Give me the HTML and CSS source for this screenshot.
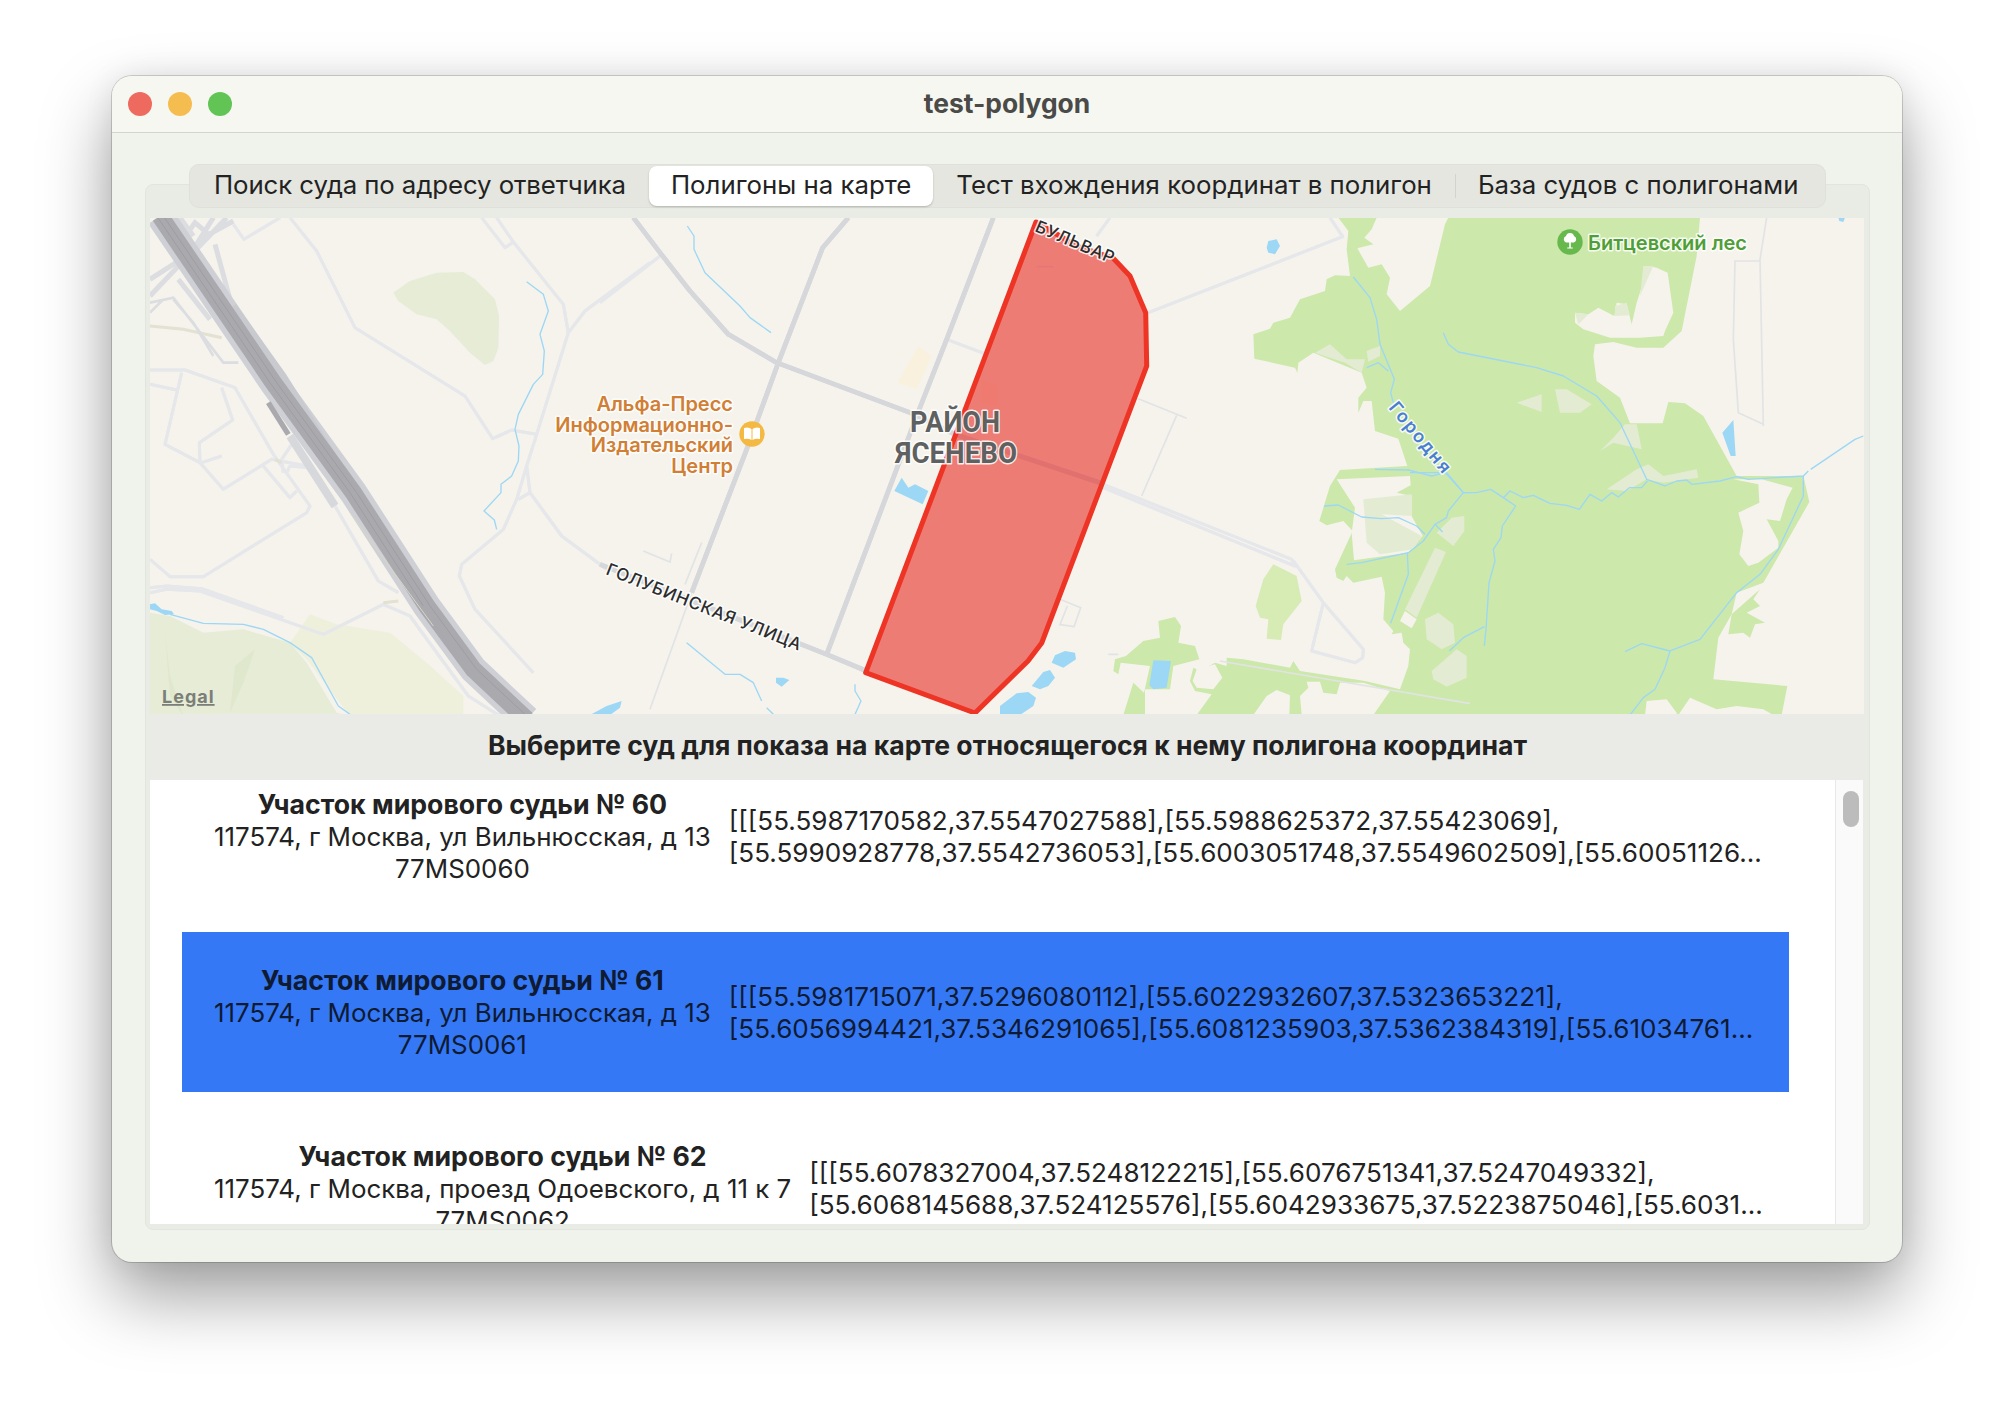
FILE: index.html
```html
<!DOCTYPE html>
<html lang="ru">
<head>
<meta charset="utf-8">
<title>test-polygon</title>
<link rel="stylesheet" href="styles.css">
</head>
<body>
<div class="window">
  <div class="titlebar">
    <div class="lights">
      <span class="light red"></span>
      <span class="light yellow"></span>
      <span class="light green"></span>
    </div>
    <div class="title">test-polygon</div>
  </div>

  <div class="content">
    <div class="tabs">
      <div class="tab tab-first">Поиск суда по адресу ответчика</div>
      <div class="tab selected">Полигоны на карте</div>
      <div class="tab">Тест вхождения координат в полигон</div>
      <div class="tab-sep"></div>
      <div class="tab">База судов с полигонами</div>
    </div>

    <div class="panel">
      <svg class="map" width="1714" height="496" viewBox="150 218 1714 496">
        <rect class="land" x="150" y="218" width="1714" height="496"/>

        <!-- left part, coordinates are 3x from 150,216 -->
        <g transform="translate(150 216) scale(.33333)">
          <path class="park" d="M730 230L780 195L860 170L940 168L975 190L1035 250L1047 300L1045 395L1030 435L1005 447L960 410L900 345L860 310L800 295L745 255Z"/>
          <path class="park-light" d="M480 1195L560 1225L720 1250L830 1340L940 1440V1500H600L470 1330L420 1280Z"/>
          <path class="park" d="M0 1190L60 1200L160 1250L280 1240L420 1280L470 1340L560 1490L600 1500H0Z"/>
          <path class="park-dark" d="M45 1250L60 1380L100 1500L60 1440ZM315 1300L255 1350L240 1490L280 1400Z"/>

          <path class="tan" d="M0 330L100 340L215 365"/>
          <g class="ramp">
            <path d="M0 240L85 150L120 120L230 5M130 100L190 5M195 85L240 250M85 190L180 310M120 130L110 55L135 20L170 50L120 120M0 190L70 145L100 120M90 5L130 60M150 70L250 15"/>
            <path class="thin" d="M0 260L70 245L220 440L265 440M0 290L40 250M70 250L130 320L190 420"/>
          </g>
          <g class="road-casing" id="minor-a">
            <path d="M420 5L500 105L615 335L945 540L1028 668L1085 642L1158 655"/>
            <path d="M995 5L1065 95L1090 78L1240 265L1255 350M1040 5L1090 78"/>
            <path d="M1500 140L1305 285L1255 350L1160 655L1130 750L1140 830L1235 960L1370 1060"/>
            <path d="M1130 750L1100 850L1060 940L935 1045L928 1080L975 1180L1150 1370M1105 850L1140 830"/>
            <path d="M250 25L282 70L390 5"/>
            <path d="M0 462L105 462L255 515L370 715L480 870L470 890L160 1082L60 1082L0 1030"/>
            <path d="M0 505L80 522M95 470L45 685L150 740L220 820L365 730L470 750"/>
            <path d="M215 515L248 612L148 680L150 740M155 740L215 720"/>
            <path d="M340 750L420 845L440 825M400 770L395 730L425 685M410 770L420 750L480 755"/>
            <path d="M0 1130L50 1120L150 1125L520 1255L700 1165L780 1200L955 1440L1050 1500M0 1115L50 1110L155 1118L400 1205"/>
            <path d="M555 870L685 1095L745 1130M845 1175L920 1290"/>
          </g>
          <use href="#minor-a" class="road-inner"/>
          <path class="tan" d="M700 1160L745 1155M375 730L395 740"/>

          <path class="mway-edge" d="M30 0L370 500L610 830L830 1170L970 1360L1130 1510"/>
          <path class="mway-side" d="M420 660L555 870"/>
          <path class="mway-right" d="M250 270L400 480L650 880"/>
          <path class="mway" d="M30 0L370 500L610 830L830 1170L970 1360L1130 1510"/>
          <path class="mway-dark" d="M355 560L415 655"/>
          <path class="mway-line" d="M20 0L360 500L600 830L820 1170M40 0L380 500L620 830L840 1170L980 1360L1130 1500"/>
          <path class="mway-mid" d="M600 890L850 1230"/>

          <path class="stream" d="M1130 197L1180 235L1195 285L1170 355L1183 405L1178 475L1150 505L1105 595L1095 640L1107 690L1105 735L1085 780L1053 805L1053 830L1002 885L1033 912L1040 940"/>
          <path class="stream" d="M60 1195L160 1222L280 1225L340 1240L420 1280L485 1325L565 1470L600 1495"/>
          <path class="water" d="M0 1165L15 1162L35 1180L65 1185L72 1195L45 1197L20 1185L0 1180ZM1320 1497L1370 1470L1415 1455L1410 1475L1380 1497Z"/>
        </g>

        <!-- forest, 3x from 1000,216 -->
        <g transform="translate(1000 216) scale(.33333)">
          <path class="forest" d="M1015 5H1130L1115 40L1093 65L1120 85L1072 97L1105 155L1145 145L1170 185L1160 235L1200 285L1290 210L1335 25L1345 5H1500V1497H1120L1170 1425L1200 1420L1225 1350L1230 1300L1210 1280L1205 1250L1175 1255L1180 1245L1150 1210L1155 1130L1145 1082L1060 1100L1040 1080L1030 1095L1010 1085L1005 1060L1058 945L1030 915L980 928L958 915L990 810L1020 762L1222 750L1195 668L1125 645L1115 555L1090 555L1075 590V545L1100 515L1085 470L940 410L895 440L892 470L885 455L763 428L760 355L810 338L820 320L870 305L900 250L975 225L980 190L1005 178L1050 180L1040 100L1045 45Z"/>
          <path class="forest-pale" d="M820 1045L890 1080L905 1155L850 1225L843 1272L800 1268L805 1210L780 1205L767 1170L790 1090Z"/>
          <path class="forest" d="M475 1215L525 1203L543 1230L535 1280L585 1290L598 1330L520 1350L510 1420H435V1497H370L400 1400L432 1430L450 1350L362 1340L355 1375L340 1365L345 1330L378 1320L430 1275L480 1265Z"/>
          <path class="forest" d="M645 1340L680 1350L680 1325L730 1330L870 1355L880 1335L900 1365L1095 1395L1200 1420L1120 1497H590L635 1435L585 1425L570 1395L580 1355L600 1365Z"/>
          <path class="land" d="M590 1360L645 1345L667 1385L640 1420L590 1415L578 1395ZM760 1497L800 1440L830 1422L870 1438L868 1497ZM905 1497L900 1440L925 1415L920 1397L960 1397L970 1430L1010 1435L1020 1400L1090 1400L1170 1425L1120 1497Z"/>
          <path class="land" d="M1010 790L1230 780L1232 808L1190 830L1235 840L1235 900L1268 960L1225 1010L1062 1033L1055 950L1065 875Z"/>
          <path class="clearing" d="M1090 850L1235 835V900L1145 895L1265 960L1240 1000L1140 1015L1100 980ZM1305 995L1338 1008L1250 1205L1215 1180ZM1310 950L1355 905L1393 900V945L1360 990ZM1275 1210L1315 1190L1360 1225L1365 1280L1325 1300L1280 1270ZM1295 1365L1370 1300L1400 1320V1385L1340 1412L1300 1390ZM945 410L990 385L1040 430L1095 430L1085 470L1035 440ZM1100 405L1140 390V420L1105 437Z"/>
          <path class="land" d="M1215 1185L1250 1210L1235 1237L1200 1215Z"/>

          <path class="water" d="M155 1340L165 1318L195 1305L225 1310L228 1330L190 1355ZM95 1410L130 1368L150 1362L165 1385L145 1410L120 1420ZM0 1470L50 1432L85 1428L108 1445L100 1470L60 1497H0ZM805 75L830 70L840 90L825 115L805 110L800 95ZM460 1333L513 1335L500 1415L460 1420L448 1408Z"/>

          <g class="stream">
            <path d="M1060 183L1110 245L1130 310L1140 385L1183 490L1172 530L1180 560M1100 455L1135 440L1165 465"/>
            <path d="M1125 760L1225 762L1295 780L1335 770L1345 780L1390 830L1345 885L1340 905L1305 925L1270 975L1225 1010L1085 1040L1040 1045M1390 830H1430L1472 820L1500 840"/>
            <path d="M972 870L1015 867L1085 903L1145 908L1195 905L1250 930L1275 955M1305 925L1328 948M1222 1010L1225 1075L1172 1222"/>
          </g>

          <g class="road-casing" id="minor-c">
            <path d="M330 5L290 60M990 5L1028 62L445 290"/>
            <path d="M310 805L875 1030L885 1050L310 815M880 1035L970 1160L1090 1300L1088 1325L1065 1340L935 1305L970 1160"/>
          </g>
          <use href="#minor-c" class="road-inner"/>
          <path class="road-thin" d="M415 548L560 607M530 598L425 840M660 1335L1500 1478M325 1315H355M180 1150L242 1175L222 1232L180 1226L202 1170"/>
        </g>

        <!-- right part of the forest, 3x from 1370,216 -->
        <g transform="translate(1370 216) scale(.33333)">
          <path class="forest" d="M300 5H990L980 120L935 345L880 395L800 395L730 378L675 385L670 420L680 495L750 545L780 622H878L895 558L945 562L1000 600L1100 780H1300L1318 858L1180 1100L1100 1130L1085 1195L1045 1265L1030 1390L1252 1410L1235 1497H300Z"/>
          <path class="forest" d="M1170 1120L1150 1150L1170 1170L1130 1190L1185 1220L1155 1225L1140 1265L1120 1250L1075 1255L1085 1195Z"/>
          <path class="land" d="M835 150L860 155L893 170L910 290L885 345L880 360L810 365L720 365L640 340L615 320V290L655 295L685 275L733 300L740 260L770 265L785 325L800 260Z"/>
          <path class="land" d="M1090 790L1165 805L1168 860L1105 890L1120 945L1108 1015L1135 1050L1165 1040L1225 995V975L1190 910L1230 915L1250 850L1268 815L1175 790Z"/>
          <path class="land" d="M925 1497L960 1445L1040 1480L1100 1470L1180 1480L1210 1497ZM825 1497L830 1455L890 1450L920 1490V1497Z"/>
          <path class="clearing" d="M440 560L515 535V588ZM555 520H590L665 565L630 590L570 590ZM765 625H800L815 700L730 680L690 705L730 665ZM710 820L800 760L835 745L880 780L980 760L985 785L880 800L830 790L770 825ZM615 290L655 295L625 325ZM820 150L850 150L810 240ZM735 270L770 260L780 298L735 300Z"/>

          <path class="water" d="M1090 612L1097 720H1082L1057 650ZM1405 5H1425L1420 18L1408 15Z"/>

          <g class="stream">
            <path d="M220 350L235 385L265 408L500 455L580 480L680 540L750 620L830 790L885 810L920 795L950 792L965 805L1050 795L1100 782L1135 790L1300 780L1315 765M1322 760L1455 670L1480 660"/>
            <path d="M120 770L230 770L280 830H320L362 820L400 845L420 825L460 845L490 838L540 862L590 868L628 880L660 835L695 855L725 830L745 843L778 815H815L832 795"/>
            <path d="M400 845L437 870L397 930L393 965L370 1000L375 1035L357 1100L348 1240L343 1290M343 1232L280 1265L238 1305"/>
            <path d="M1300 780V840L1225 1000L1170 1075L1100 1130L990 1270L900 1305L815 1283L765 1307M900 1305L885 1355L855 1420L820 1445L780 1497"/>
          </g>
          <path class="road-thin" d="M1190 5L1170 130L1180 630M1170 135H1095L1090 370L1105 590L1180 625"/>
        </g>

        <!-- middle, 3x from 600,216 -->
        <g transform="translate(600 216) scale(.33333)">
          <path class="building" d="M955 390L995 420L950 520L893 500Z"/>
          <path class="building" d="M1145 490L1195 510L1190 570L1140 560Z"/>
          <path class="stream" d="M262 30L282 60V100L315 170L420 270L450 305L513 350M260 1280L375 1375H420L460 1400L485 1455M765 1405V1425L783 1455L765 1495M500 1475L520 1495"/>
          <path class="water" d="M905 785L925 815L945 805L985 825L968 865L883 825ZM528 1385H550L568 1392L545 1412L528 1400Z"/>
          <g class="road-casing" id="minor-b">
            <path d="M0 260L180 120M1040 370L1160 415"/>
          </g>
          <use href="#minor-b" class="road-inner"/>
          <path class="road-thin" d="M130 1005L210 1038L215 1012M305 980L255 1105M1310 152H1360"/>
          <g class="road-main" id="main-b">
            <path d="M100 5L180 110L270 225L385 355L530 440L930 590L1065 655L1500 800"/>
            <path d="M745 5L668 95L535 440L440 700L275 1130"/>
            <path d="M1180 5L1040 370L950 600L680 1315"/>
            <path d="M0 1045L680 1315L800 1365"/>
          </g>
          <use href="#main-b" class="road-main-inner"/>
          <path class="road-thin" d="M275 1130L150 1480"/>
          <path class="road-thin" d="M1300 30L1200 300"/>
        </g>

        <!-- the polygon from the selected row -->
        <path class="polygon" d="M1036 222L1077 246L1113 258L1130 276L1145.700 312.700L1146.700 366L1041.700 643L1028 661L975 713L865.700 672.700Z"/>

        <g class="label label-orange">
          <text x="733" y="411">Альфа-Пресс</text>
          <text x="733" y="432">Информационно-</text>
          <text x="733" y="452">Издательский</text>
          <text x="733" y="473">Центр</text>
        </g>
        <circle class="poi-book" cx="752" cy="434" r="12.700"/>
        <path class="poi-glyph" d="M744 428q4.500-1.500 7.500 1v11q-3-2-7.500-1zM760 428q-4.500-1.500-7.500 1v11q3-2 7.500-1z"/>

        <text class="label label-district" x="910" y="432" textLength="90" lengthAdjust="spacingAndGlyphs">РАЙОН</text>
        <text class="label label-district" x="895" y="463" textLength="122" lengthAdjust="spacingAndGlyphs">ЯСЕНЕВО</text>

        <text class="label label-street" transform="translate(605 574) rotate(21.600)" textLength="208">ГОЛУБИНСКАЯ УЛИЦА</text>
        <text class="label label-street" transform="translate(1034 231) rotate(23)" textLength="84">БУЛЬВАР</text>
        <text class="label label-river" transform="translate(1388 408) rotate(50.500)" textLength="86">Городня</text>

        <circle class="poi-tree" cx="1570" cy="242" r="12.700"/>
        <path class="poi-glyph" d="M1570 233a4 4 0 0 1 4 3a3.500 3.500 0 0 1 0 6.500h-3.200v5h2v1h-5.600v-1h2v-5H1566a3.500 3.500 0 0 1 0-6.500a4 4 0 0 1 4-3z"/>
        <text class="label label-park" x="1588" y="250">Битцевский лес</text>

        <text class="legal" x="162" y="703">Legal</text>
      </svg>

      <div class="list-title">Выберите суд для показа на карте относящегося к нему полигона координат</div>

      <div class="list">
        <div class="rows">
          <div class="row">
            <div class="court">
              <b>Участок мирового судьи № 60</b>
              <span>117574, г Москва, ул Вильнюсская, д 13</span>
              <span>77MS0060</span>
            </div>
            <div class="coords">
              <span>[[[55.5987170582,37.5547027588],[55.5988625372,37.55423069],</span>
              <span>[55.5990928778,37.5542736053],[55.6003051748,37.5549602509],[55.60051126...</span>
            </div>
          </div>
          <div class="row active">
            <div class="court">
              <b>Участок мирового судьи № 61</b>
              <span>117574, г Москва, ул Вильнюсская, д 13</span>
              <span>77MS0061</span>
            </div>
            <div class="coords">
              <span>[[[55.5981715071,37.5296080112],[55.6022932607,37.5323653221],</span>
              <span>[55.6056994421,37.5346291065],[55.6081235903,37.5362384319],[55.61034761...</span>
            </div>
          </div>
          <div class="row">
            <div class="court">
              <b>Участок мирового судьи № 62</b>
              <span>117574, г Москва, проезд Одоевского, д 11 к 7</span>
              <span>77MS0062</span>
            </div>
            <div class="coords">
              <span>[[[55.6078327004,37.5248122215],[55.6076751341,37.5247049332],</span>
              <span>[55.6068145688,37.524125576],[55.6042933675,37.5223875046],[55.6031...</span>
            </div>
          </div>
        </div>
        <div class="scrollbar"><div class="thumb"></div></div>
      </div>
    </div>
  </div>
</div>
</body>
</html>
```

FILE: styles.css
```css
* { box-sizing: border-box; }
body { margin: 0; height: 1410px; background: #fff; font-family: Inter, "Noto Sans", sans-serif; font-size: 26px; color: #222; overflow: hidden; }

.window { width: 1790px; height: 1186px; margin: 76px 0 0 112px; border-radius: 20px; background: #f0f2ec; overflow: hidden; box-shadow: 0 0 0 1px rgba(0,0,0,.16), 0 34px 70px rgba(0,0,0,.38), 0 0 30px rgba(0,0,0,.08); }

.titlebar { height: 57px; display: grid; grid-template-columns: 1fr auto 1fr; align-items: center; background: #f6f7f0; border-bottom: 1px solid #d4d5d0; }
.lights { display: flex; gap: 16px; padding-left: 16px; }
.light { width: 24px; height: 24px; border-radius: 50%; }
.red { background: #ee6a5f; }
.yellow { background: #f5bd4f; }
.green { background: #61c454; }
.title { font-weight: 700; font-size: 26.400px; color: #4a4a48; margin-bottom: 3px; }

.content { padding: 31px 32px 0 33px; }

.tabs { position: relative; z-index: 1; display: flex; align-items: center; height: 44px; margin: 0 44px -24px; padding: 0 2px; background: #e4e6df; border: 1px solid #dee0d9; border-radius: 10px; }
.tab { height: 40px; padding: 0 22px 4px; margin-right: 1px; display: flex; align-items: center; white-space: nowrap; font-size: 25.800px; }
.tab-first { letter-spacing: -.1px; }
.tab.selected { background: #fff; border-radius: 8px; box-shadow: 0 1px 2px rgba(0,0,0,.22); }
.tab-sep { width: 1px; height: 24px; background: #d2d4cd; }

.panel { height: 1046px; padding: 33px 5px 6px; background: #e9ebe5; border: 1px solid #e2e4dd; border-radius: 8px; }

.map { display: block; margin-left: -1px; }
.land { fill: #f5f3ec; }
.park { fill: #e6ecd6; }
.park-light { fill: #eef0dc; }
.park-dark { fill: #dfe8cc; }
.forest { fill: #cce8ab; }
.forest-pale { fill: #d6ecb4; }
.clearing { fill: #e3ecd3; }
.water { fill: #9cd7f5; }
.building { fill: #f9f1de; }
.stream { fill: none; stroke: #9cd7f5; stroke-width: 4; stroke-linejoin: round; }
.tan { fill: none; stroke: #e3e1d2; stroke-width: 9; }
.ramp { fill: none; stroke: #dcdde1; stroke-width: 15; }
.ramp .thin { stroke-width: 8; }
.road-casing { fill: none; stroke: #e6e7ea; stroke-width: 9; stroke-linejoin: round; }
.road-inner { fill: none; stroke: #f3f3f3; stroke-width: 4; stroke-linejoin: round; }
.road-thin { fill: none; stroke: #e2e3e5; stroke-width: 5; }
.road-main { fill: none; stroke: #d6d7db; stroke-width: 14; stroke-linejoin: round; }
.road-main-inner { fill: none; stroke: #cbccd0; stroke-width: 3; stroke-linejoin: round; }
.mway-edge { fill: none; stroke: #cfd0d5; stroke-width: 84; }
.mway-side { fill: none; stroke: #d7d8dc; stroke-width: 24; }
.mway-right { fill: none; stroke: #c9cacf; stroke-width: 20; }
.mway { fill: none; stroke: #a9a9ae; stroke-width: 52; }
.mway-dark { fill: none; stroke: #a9a9ae; stroke-width: 16; }
.mway-line { fill: none; stroke: #9d9da3; stroke-width: 3; }
.mway-mid { fill: none; stroke: #d8d6c6; stroke-width: 3; }

.polygon { fill: rgba(232,45,38,.6); stroke: #ee3424; stroke-width: 5; stroke-linejoin: round; }

.label { font-family: Inter, "Noto Sans", sans-serif; paint-order: stroke; stroke: rgba(255,255,255,.85); stroke-width: 3px; stroke-linejoin: round; }
.label-orange { font-size: 20px; font-weight: 600; fill: #d17f35; text-anchor: end; }
.label-district { font-family: Roboto, sans-serif; font-size: 30px; font-weight: 700; fill: #5f6160; }
.label-street { font-size: 17px; font-weight: 500; fill: #2c2c2c; }
.label-river { font-size: 18px; font-weight: 600; fill: #4a7fd0; }
.label-park { font-size: 20px; font-weight: 600; fill: #4f9e37; }
.legal { font-family: Inter, sans-serif; font-size: 18px; font-weight: 700; letter-spacing: 1px; fill: #7b7f78; text-decoration: underline; }
.poi-book { fill: #f4b942; }
.poi-tree { fill: #67b84d; }
.poi-glyph { fill: #fff; }

.list-title { height: 66px; padding-bottom: 5px; display: flex; align-items: center; justify-content: center; font-weight: 700; font-size: 26.550px; background: #eaebe6; margin: 0 -1px 0 -1px; }

.list { position: relative; height: 444px; margin: 0 1px 0 -1px; background: #fff; overflow: hidden; }
.rows { display: flex; flex-direction: column; gap: 16px; width: 1607px; margin: -24px 0 0 32px; }
.row { height: 160px; flex: none; display: flex; align-items: center; gap: 18px; padding-left: 32px; line-height: 32px; white-space: nowrap; }
.row.active { background: #3478f6; color: #0f1a33; }
.court { display: flex; flex-direction: column; align-items: center; text-align: center; padding-top: 1px; }
.court b { font-size: 26.700px; margin-bottom: 1px; }
.court span { font-size: 25.900px; }
.coords { display: flex; flex-direction: column; font-size: 26.100px; padding-top: 2px; }

.scrollbar { position: absolute; top: 0; right: 0; bottom: 0; width: 28px; padding: 11px 0 0 7px; background: #fafafa; border-left: 1px solid #e8e8e8; }
.thumb { width: 16px; height: 36px; border-radius: 8px; background: #bcbcbc; }
```
